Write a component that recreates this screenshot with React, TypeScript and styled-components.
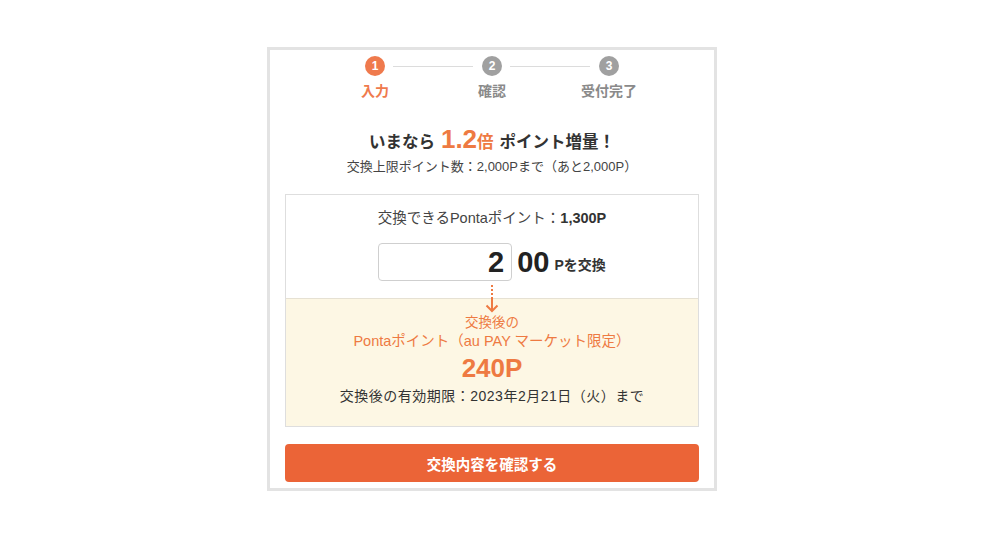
import React from "react";
import styled, { createGlobalStyle } from "styled-components";

const GlobalStyle = createGlobalStyle`
  html, body {
    margin: 0;
    padding: 0;
    background: #fff;
  }
  body {
    font-family: "Liberation Sans", "Noto Sans CJK JP", sans-serif;
    color: #333;
  }
`;

const ORANGE = "#ee7a42";

const Page = styled.div`
  display: flex;
  justify-content: center;
  padding-top: 47px;
`;

const Frame = styled.div`
  width: 450px;
  box-sizing: border-box;
  border: 3px solid #e3e3e3;
  background: #fff;
  padding: 6px 15px 6px;
`;

const Stepper = styled.ol`
  display: flex;
  justify-content: center;
  list-style: none;
  margin: 0;
  padding: 0;
`;

const Step = styled.li`
  position: relative;
  width: 117px;
  display: flex;
  flex-direction: column;
  align-items: center;
  gap: 5px;

  &:not(:first-child)::before {
    content: "";
    position: absolute;
    top: 10px;
    right: calc(50% + 19px);
    width: 80px;
    height: 1px;
    background: #dcdcdc;
  }
`;

const StepDot = styled.span<{ $active?: boolean }>`
  width: 20px;
  height: 20px;
  border-radius: 50%;
  background: ${(p) => (p.$active ? "#ef7a4d" : "#a0a0a0")};
  color: #fff;
  font-size: 12px;
  font-weight: bold;
  display: flex;
  align-items: center;
  justify-content: center;
`;

const StepLabel = styled.span<{ $active?: boolean }>`
  font-size: 14px;
  line-height: 20px;
  font-weight: bold;
  color: ${(p) => (p.$active ? "#ef7a4d" : "#8a8a8a")};
`;

const Headline = styled.p`
  margin: 23px 0 0;
  text-align: center;
  font-size: 16.5px;
  line-height: 30px;
  font-weight: bold;
  color: #333;
`;

const Big = styled.span`
  color: ${ORANGE};
  font-size: 26px;
  margin-left: 6px;
`;

const Bai = styled.span`
  color: ${ORANGE};
  margin-right: 6px;
`;

const Limit = styled.p`
  margin: 1px 0 0;
  text-align: center;
  font-size: 13px;
  line-height: 18px;
  color: #444;
`;

const Panel = styled.section`
  margin-top: 18px;
  border: 1px solid #dedede;
`;

const InputArea = styled.div`
  padding: 13px 0 17px;
  display: flex;
  flex-direction: column;
  align-items: center;
  gap: 15px;
`;

const Available = styled.p`
  margin: 0;
  font-size: 14.5px;
  line-height: 20px;
  color: #444;

  strong {
    color: #333;
  }
`;

const AmountRow = styled.div`
  display: flex;
  align-items: center;
  gap: 5px;
`;

const AmountInput = styled.input`
  width: 134px;
  height: 38px;
  box-sizing: border-box;
  border: 1.5px solid #cfcfcf;
  border-radius: 4px;
  padding: 0 7px;
  text-align: right;
  font-family: inherit;
  font-size: 29px;
  font-weight: bold;
  color: #222;
  outline: none;
`;

const Zeros = styled.span`
  font-size: 29px;
  font-weight: bold;
  color: #222;
`;

const Unit = styled.span`
  font-size: 14px;
  font-weight: bold;
  color: #333;
  margin-top: 4px;
`;

const Result = styled.div`
  position: relative;
  background: #fdf7e4;
  border-top: 1px solid #e6e1d3;
  padding: 15px 0 21px;
  display: flex;
  flex-direction: column;
  align-items: center;
`;

const Arrow = styled.svg`
  position: absolute;
  top: -14px;
  left: 50%;
  transform: translateX(-50%);
`;

const ResultLabel = styled.p<{ $size: number }>`
  margin: 0;
  font-size: ${(p) => p.$size}px;
  line-height: 18px;
  color: ${ORANGE};
`;

const ResultValue = styled.p`
  margin: 3px 0 4px;
  font-size: 26px;
  line-height: 30px;
  font-weight: bold;
  color: ${ORANGE};
`;

const Expiry = styled.p`
  margin: 0;
  font-size: 14px;
  line-height: 18px;
  letter-spacing: 0.5px;
  color: #333;
`;

const ConfirmButton = styled.button`
  display: block;
  margin-top: 17px;
  width: 100%;
  height: 38px;
  border: none;
  border-radius: 4px;
  background: #eb6437;
  color: #fff;
  font-family: inherit;
  font-size: 14.5px;
  font-weight: bold;
  cursor: pointer;
`;

const steps = [
  { n: 1, label: "入力", active: true },
  { n: 2, label: "確認" },
  { n: 3, label: "受付完了" },
];

export default function App() {
  return (
    <>
      <GlobalStyle />
      <Page>
        <Frame>
          <Stepper>
            {steps.map((s) => (
              <Step key={s.n}>
                <StepDot $active={s.active}>{s.n}</StepDot>
                <StepLabel $active={s.active}>{s.label}</StepLabel>
              </Step>
            ))}
          </Stepper>

          <Headline>
            いまなら<Big>1.2</Big>
            <Bai>倍</Bai>ポイント増量！
          </Headline>
          <Limit>交換上限ポイント数：2,000Pまで（あと2,000P）</Limit>

          <Panel>
            <InputArea>
              <Available>
                交換できるPontaポイント：<strong>1,300P</strong>
              </Available>
              <AmountRow>
                <AmountInput defaultValue="2" />
                <Zeros>00</Zeros>
                <Unit>Pを交換</Unit>
              </AmountRow>
            </InputArea>
            <Result>
              <Arrow width="14" height="28" viewBox="0 0 14 28">
                <g fill={ORANGE}>
                  <rect x="6" y="0" width="2" height="2" />
                  <rect x="6" y="4" width="2" height="2" />
                  <rect x="6" y="8" width="2" height="2" />
                </g>
                <path
                  d="M7 12 V26 M1.5 20.5 L7 26 L12.5 20.5"
                  stroke={ORANGE}
                  strokeWidth="2"
                  fill="none"
                />
              </Arrow>
              <ResultLabel $size={13.5}>交換後の</ResultLabel>
              <ResultLabel $size={14.5}>Pontaポイント（au PAY マーケット限定）</ResultLabel>
              <ResultValue>240P</ResultValue>
              <Expiry>交換後の有効期限：2023年2月21日（火）まで</Expiry>
            </Result>
          </Panel>

          <ConfirmButton>交換内容を確認する</ConfirmButton>
        </Frame>
      </Page>
    </>
  );
}
